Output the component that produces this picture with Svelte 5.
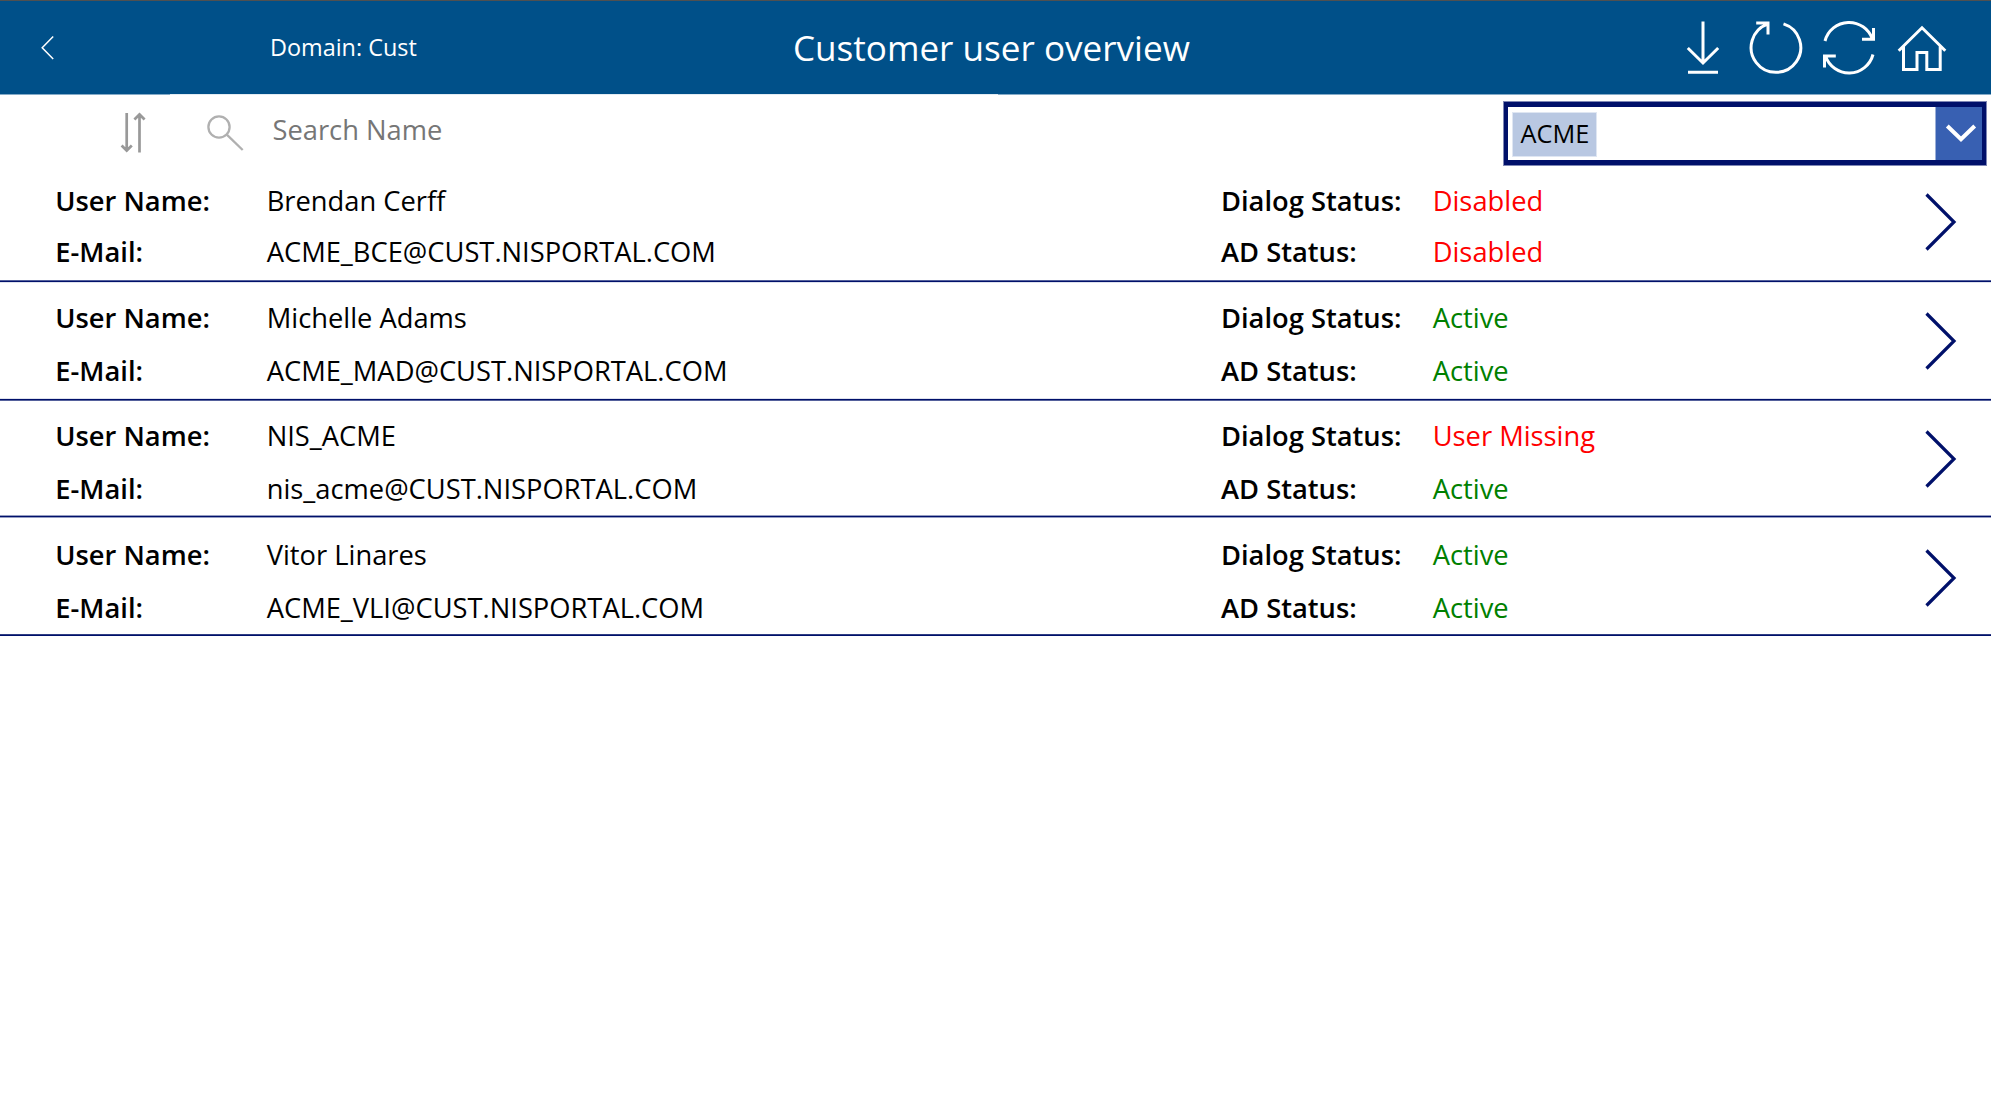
<script>
  const users = [
    { name: 'Brendan Cerff', mail: 'ACME_BCE@CUST.NISPORTAL.COM', dialog: 'Disabled', ad: 'Disabled' },
    { name: 'Michelle Adams', mail: 'ACME_MAD@CUST.NISPORTAL.COM', dialog: 'Active', ad: 'Active' },
    { name: 'NIS_ACME', mail: 'nis_acme@CUST.NISPORTAL.COM', dialog: 'User Missing', ad: 'Active' },
    { name: 'Vitor Linares', mail: 'ACME_VLI@CUST.NISPORTAL.COM', dialog: 'Active', ad: 'Active' },
  ];
</script>

<div class="app">
  <header>
    <svg class="back" width="20" height="30" viewBox="0 0 20 30"><path d="M15.2 3.5 4.2 14.7 15.2 26" /></svg>
    <span class="domain">Domain: Cust</span>
    <h1>Customer user overview</h1>
    <nav>
      <svg width="36" height="60" viewBox="0 0 36 60"><path d="M18 4.5V45M2.8 31 18 46 33.2 31M3 55.3H33" /></svg>
      <svg width="56" height="60" viewBox="0 0 56 60"><path d="M35.5 6.9A24.8 24.8 0 1 1 19.5 7.2M8.2 6H20V17.6" /></svg>
      <svg width="58" height="60" viewBox="0 0 58 60"><path d="M5 24A24.8 24.8 0 0 1 52.5 22.3M42 22.3H53.5V11M53 37.5A24.8 24.8 0 0 1 5.5 39M4.5 50.5V39H15.8" /></svg>
      <svg width="52" height="60" viewBox="0 0 52 60"><path d="M2.7 33.7 26 10.8 49.3 33.7M7.5 29.5V52.5H21V35.5H30.8V52.5H44.2V29.5" /></svg>
    </nav>
  </header>
  <div class="edge"></div>

  <div class="toolbar">
    <svg class="sort" width="24" height="44" viewBox="0 0 24 44"><path d="M6.7 3V41M1.6 35.5 6.7 40.5 11.8 35.5M19.5 42.5V5M14.4 9.5 19.5 4.5 24.6 9.5" /></svg>
    <svg class="search" width="40" height="40" viewBox="0 0 40 40"><circle cx="14" cy="14" r="10.6" /><path d="M21.8 21.6 37.7 37" /></svg>
    <span class="placeholder">Search Name</span>
    <div class="select">
      <div class="field"><span class="tag">ACME</span></div>
      <div class="toggle"><svg width="32" height="20" viewBox="0 0 32 20"><path d="M2.3 2 16 15.3 29.7 2" /></svg></div>
    </div>
  </div>

  <main>
    {#each users as user}
      <section>
        <div class="cells">
          <b>User Name:</b><span>{user.name}</span>
          <b>Dialog Status:</b><span class:ok={user.dialog === 'Active'} class:bad={user.dialog !== 'Active'}>{user.dialog}</span>
          <b>E-Mail:</b><span>{user.mail}</span>
          <b>AD Status:</b><span class:ok={user.ad === 'Active'} class:bad={user.ad !== 'Active'}>{user.ad}</span>
        </div>
        <svg class="open" width="36" height="60" viewBox="0 0 36 60"><path d="M3.5 2.5 31 30 3.5 57.5" /></svg>
        <div class="rule"></div>
      </section>
    {/each}
  </main>
</div>

<style>
  :global(body) { background: #fff; overflow: hidden; }
  .app { width: 1991px; height: 1120px; background: #fff; color: #000; font-family: 'Open Sans', sans-serif; font-size: 27.3px; }
  svg { display: block; fill: none; flex: none; }
  header { box-sizing: border-box; height: 94px; display: flex; border-top: 1px solid #505050; background: #005089; color: #fff; white-space: nowrap; }
  header svg { stroke: #fff; stroke-width: 3; }
  header .back { margin: 32px 0 0 38px; stroke-width: 1.5; }
  .edge { height: 1px; background: linear-gradient(90deg, #84abc8 170px, #e3ecf3 170px 998px, #84abc8 998px); }
  .domain { width: 523px; margin: 26px 0 0 212px; font-size: 23.4px; line-height: 40px; }
  h1 { width: 892px; margin: 21px 0 0; font-size: 35.1px; font-weight: 400; line-height: 50px; }
  nav { display: flex; padding-top: 16px; }
  nav svg:nth-child(2) { margin-left: 27px; }
  nav svg:nth-child(3) { margin-left: 16px; }
  nav svg:nth-child(4) { margin-left: 18px; }
  .toolbar { height: 72px; display: flex; }
  .sort { margin: 15px 0 0 120px; stroke: #999; stroke-width: 2.7; overflow: visible; }
  .search { margin: 17.5px 0 0 61px; stroke: #b0b0b0; stroke-width: 2.3; }
  .placeholder { width: 1231.5px; margin: 15px 0 0 27.5px; color: #767676; line-height: 40px; }
  .select { box-sizing: border-box; width: 482px; height: 63px; margin-top: 7px; display: flex; border: solid #00106a; border-width: 5px 4px; box-shadow: 0 0 0 1px #7f87b5; }
  .field { flex: 1; padding: 5px 0 0 4px; }
  .tag { display: block; box-sizing: border-box; width: 85px; height: 45px; padding-left: 7.5px; border: 1px solid #dfe6f2; background: #b9c8e2; background-clip: padding-box; font-size: 25.3px; line-height: 41px; }
  .toggle { box-sizing: border-box; width: 47px; padding-left: 3px; display: flex; justify-content: center; align-items: center; border-left: 1px solid #9bafd8; background: #3860b2; background-clip: padding-box; }
  .toggle svg { stroke: #fff; stroke-width: 4; }
  section { --pad: 15px; --gap: 13px; height: 118px; display: grid; grid-template: 1fr 3px / 1fr 68px; }
  section:nth-child(1) { --pad: 14px; --gap: 11px; --icon: 25px; height: 116px; }
  section:nth-child(2) { --icon: 27.5px; }
  section:nth-child(3) { --icon: 28px; height: 117px; }
  section:nth-child(4) { --pad: 17px; --icon: 29.5px; height: 119px; }
  .cells { display: grid; grid-template-columns: 211px 954.7px 211.3px 1fr; align-content: start; row-gap: var(--gap); padding: var(--pad) 0 0 55.3px; line-height: 40px; white-space: nowrap; }
  .cells span { padding-left: 0.4px; }
  b { font-weight: 600; }
  .ok { color: #008000; }
  .bad { color: #f00; }
  .open { margin-top: var(--icon); stroke: #00106a; stroke-width: 3.2; }
  .rule { grid-column: 1 / 3; background: linear-gradient(#55619c 1px, #00106a 1px 2px, #dfe2ed 2px); }
  section:nth-child(2) .rule { background: linear-gradient(#dfe2ed 1px, #00106a 1px 2px, #55619c 2px); }
  section:nth-child(3) .rule { background: linear-gradient(#959dc2 1px, #00106a 1px 2px, #959dc2 2px); }
  section:nth-child(4) .rule { background: linear-gradient(#303d83 1px, #00106a 1px 2px, #fff 2px); }
</style>
